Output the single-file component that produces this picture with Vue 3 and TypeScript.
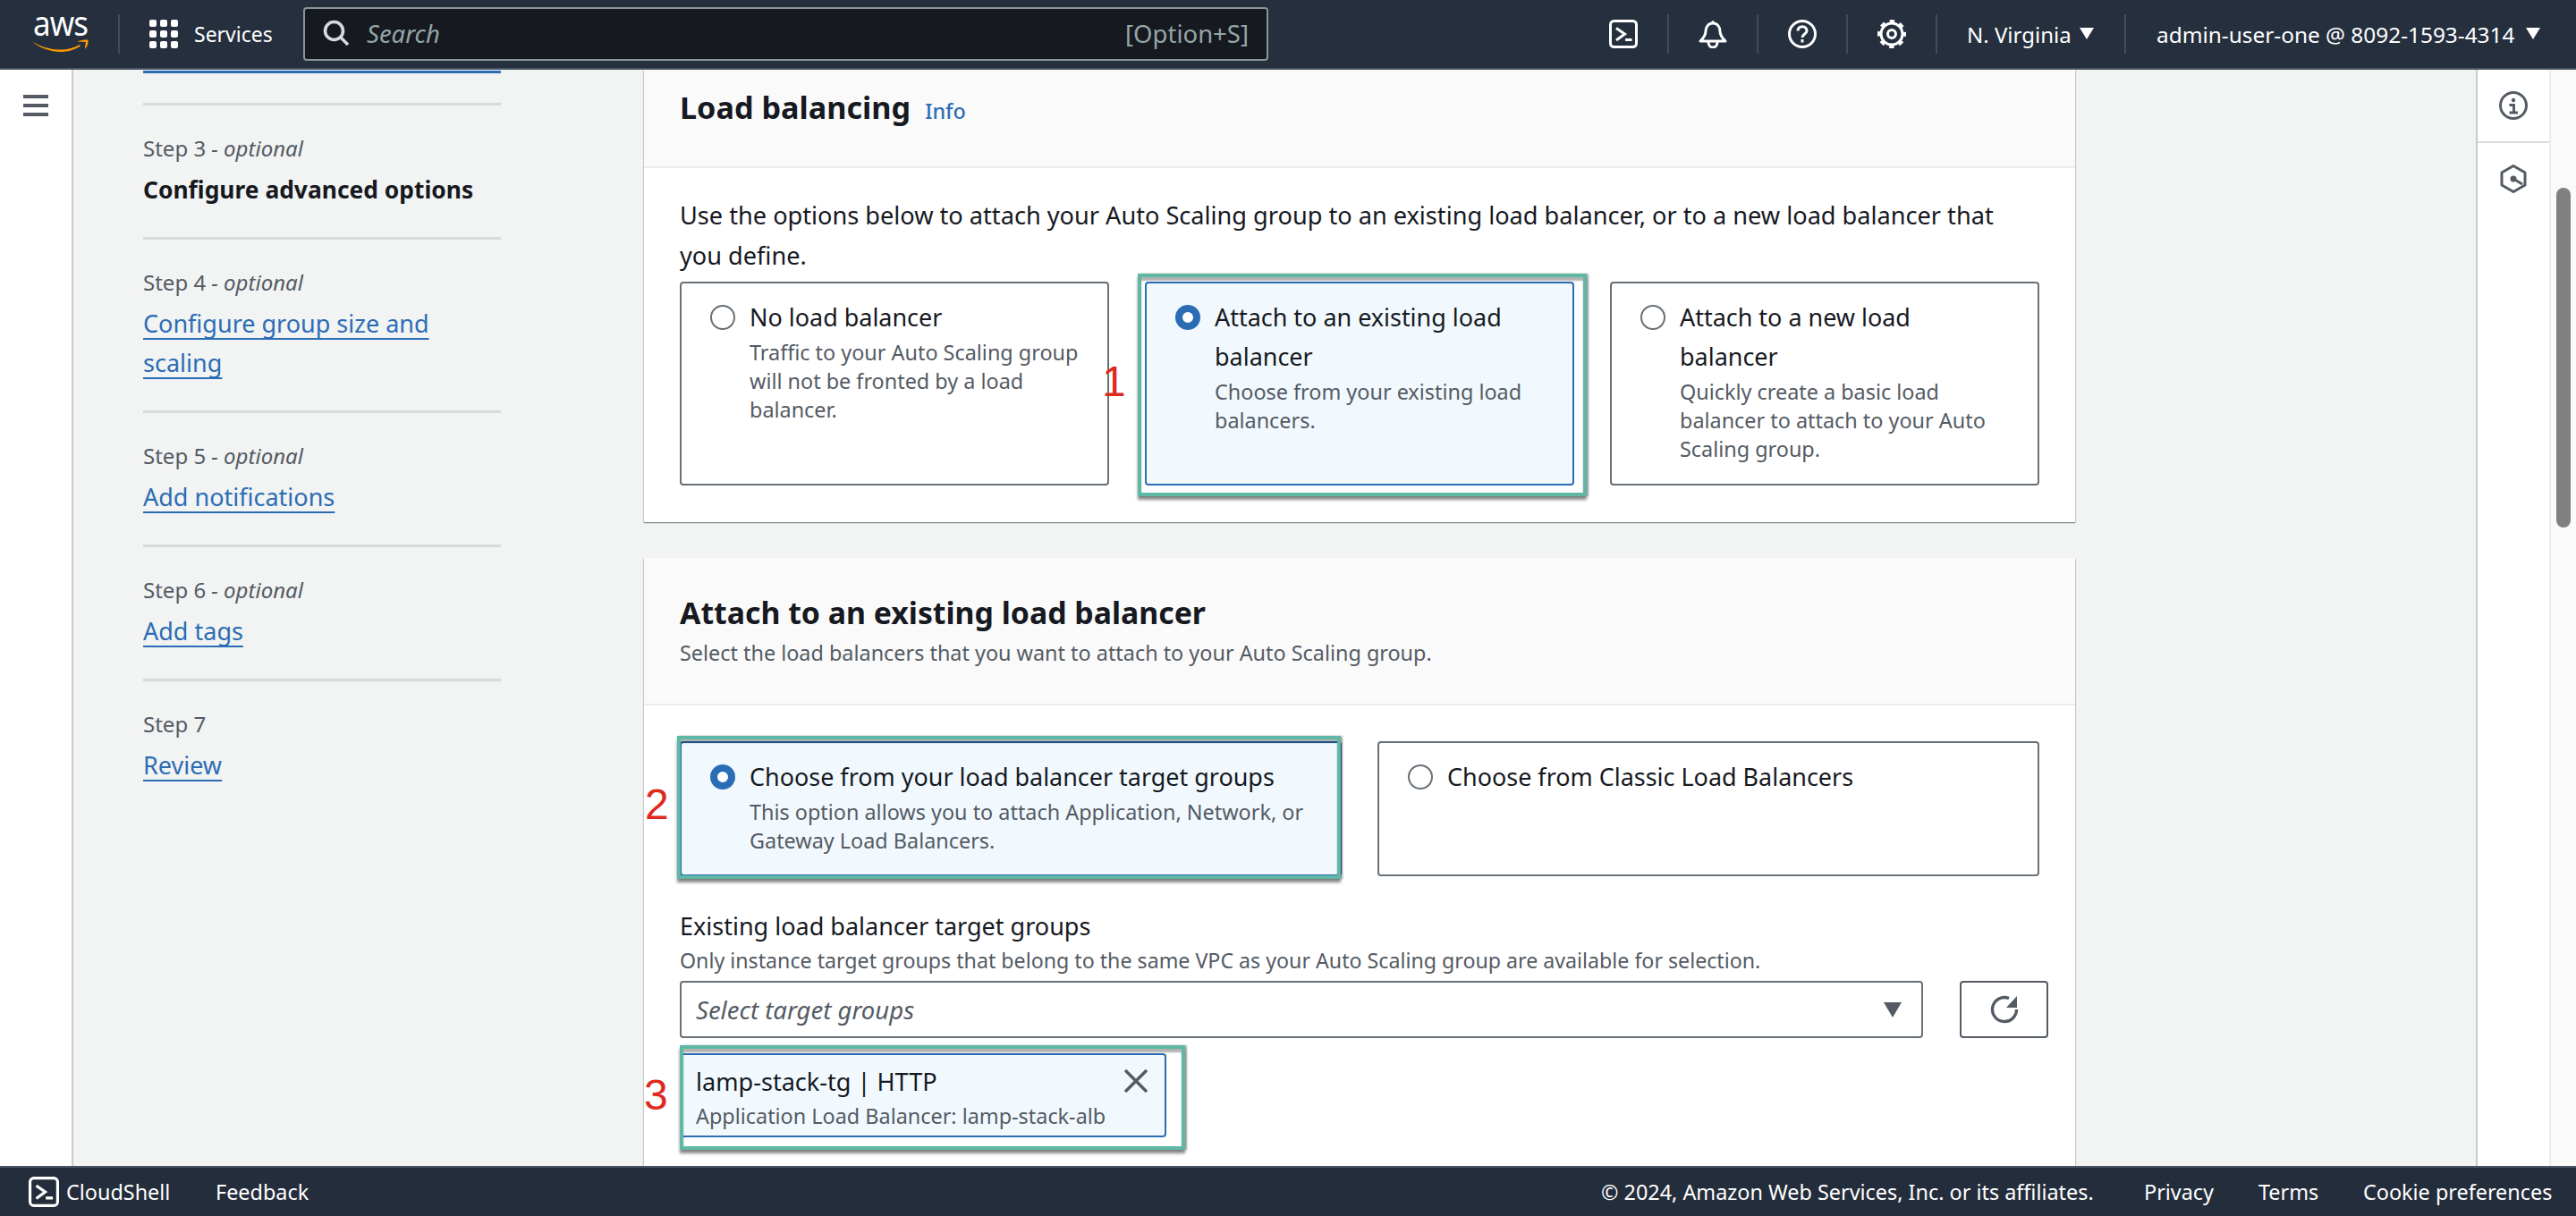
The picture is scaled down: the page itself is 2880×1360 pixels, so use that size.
<script setup lang="ts">
interface NavStep { label: string; optional: boolean; title: string; current?: boolean }
const steps: NavStep[] = [
  { label: 'Step 3', optional: true, title: 'Configure advanced options', current: true },
  { label: 'Step 4', optional: true, title: 'Configure group size and scaling' },
  { label: 'Step 5', optional: true, title: 'Add notifications' },
  { label: 'Step 6', optional: true, title: 'Add tags' },
  { label: 'Step 7', optional: false, title: 'Review' },
]
</script>

<template>
  <div class="page">
    <header class="topbar">
      <div class="logo">
        <span class="logo-word">aws</span>
        <svg class="smile" width="63" height="14" viewBox="0 0 63 14"><path d="M0 2.500C12 10 24 11.500 32 11.500c8 0 15-2 21-5.500l1 1.500C47 12 39 14 32 14 21 14 9 10 0 2.500z" fill="#f90"/><path d="M50 2.500c4-1.500 8-2 12.500-2 .5 4-1 8-3.500 10.500 0-3 .5-5.500 1-8-3.500 0-6.500-.3-10-.5z" fill="#f90"/></svg>
      </div>
      <span class="sep logo-sep"></span>
      <svg class="grid" width="32" height="32" viewBox="0 0 32 32" fill="#fff"><rect x="0" y="0" width="8" height="8" rx="2"/><rect x="12" y="0" width="8" height="8" rx="2"/><rect x="24" y="0" width="8" height="8" rx="2"/><rect x="0" y="12" width="8" height="8" rx="2"/><rect x="12" y="12" width="8" height="8" rx="2"/><rect x="24" y="12" width="8" height="8" rx="2"/><rect x="0" y="24" width="8" height="8" rx="2"/><rect x="12" y="24" width="8" height="8" rx="2"/><rect x="24" y="24" width="8" height="8" rx="2"/></svg>
      <span class="services">Services</span>
      <div class="search">
        <svg width="30" height="30" viewBox="0 0 30 30" fill="none" stroke="#d5dbdb" stroke-width="3.600"><circle cx="12.500" cy="12.500" r="10"/><path d="M20 20l8 8"/></svg>
        <span class="search-text">Search</span>
        <span class="search-key">[Option+S]</span>
      </div>
      <div class="top-right">
        <button class="ticon"><svg width="32" height="32" viewBox="0 0 32 32" fill="none" stroke="#fff" stroke-width="3"><rect x="1.500" y="1.500" width="29" height="29" rx="4"/><path d="M8 9.500l9.500 6.500-9.500 7M18 22.500h7.500"/></svg></button>
        <span class="sep"></span>
        <button class="ticon"><svg width="32" height="32" viewBox="0 0 32 32" fill="none" stroke="#fff" stroke-width="3" stroke-linejoin="round"><path d="M2 24h28c-4-4-6-7-6-11 0-5-3-9-8-9s-8 4-8 9c0 4-2 7-6 11z"/><path d="M11 25c0 8 10 8 10 0"/><circle cx="16" cy="2.500" r="1.500" fill="#fff" stroke="none"/></svg></button>
        <span class="sep"></span>
        <button class="ticon"><svg width="32" height="32" viewBox="0 0 32 32" fill="none" stroke="#fff" stroke-width="3"><circle cx="16" cy="16" r="14.500"/><path d="M11 12.500c0-6.500 10-6.500 10 0 0 3.500-5 3.500-5 7.500"/><path d="M16 22v3.500"/></svg></button>
        <span class="sep"></span>
        <button class="ticon"><svg width="32" height="32" viewBox="0 0 32 32" fill="none" stroke="#fff"><circle cx="16" cy="16" r="12" stroke-width="3"/><circle cx="16" cy="16" r="14" stroke-width="4" stroke-dasharray="5.400 5.600" stroke-dashoffset="2.700"/><circle cx="16" cy="16" r="4.500" stroke-width="3"/></svg></button>
        <span class="sep"></span>
        <span class="region">N. Virginia</span><span class="tri"></span>
        <span class="sep user-sep"></span>
        <span class="user">admin-user-one @ 8092-1593-4314</span><span class="tri"></span>
      </div>
    </header>

    <div class="middle">
      <div class="rail">
        <div class="burger"><i></i><i></i><i></i></div>
      </div>

      <nav class="nav">
        <div class="clipped-link"></div>
        <section v-for="s in steps" :key="s.label" class="step">
          <div class="step-label">{{ s.label }}<em v-if="s.optional"> - optional</em></div>
          <div v-if="s.current" class="step-current">{{ s.title }}</div>
          <a v-else class="step-link">{{ s.title }}</a>
        </section>
      </nav>

      <main class="main">
        <section class="card">
          <div class="card-head first-head">
            <h2 class="h-lb">Load balancing</h2><a class="info">Info</a>
          </div>
          <div class="card-body body-one">
            <p class="intro">Use the options below to attach your Auto Scaling group to an existing load balancer, or to a new load balancer that you define.</p>
            <div class="tiles three">
              <div class="tile">
                <span class="radio"></span>
                <div><div class="t-title">No load balancer</div><div class="t-desc">Traffic to your Auto Scaling group will not be fronted by a load balancer.</div></div>
              </div>
              <div class="tile on">
                <span class="radio"></span>
                <div><div class="t-title">Attach to an existing load balancer</div><div class="t-desc">Choose from your existing load balancers.</div></div>
                <span class="mark mark-1"></span>
                <span class="num num-1">1</span>
              </div>
              <div class="tile">
                <span class="radio"></span>
                <div><div class="t-title">Attach to a new load balancer</div><div class="t-desc">Quickly create a basic load balancer to attach to your Auto Scaling group.</div></div>
              </div>
            </div>
          </div>
        </section>

        <section class="card second">
          <div class="card-head second-head">
            <h2 class="h-attach">Attach to an existing load balancer</h2>
            <p class="head-desc">Select the load balancers that you want to attach to your Auto Scaling group.</p>
          </div>
          <div class="card-body body-two">
            <div class="tiles two">
              <div class="tile on">
                <span class="radio"></span>
                <div><div class="t-title">Choose from your load balancer target groups</div><div class="t-desc">This option allows you to attach Application, Network, or Gateway Load Balancers.</div></div>
                <span class="mark mark-2"></span>
                <span class="num num-2">2</span>
              </div>
              <div class="tile">
                <span class="radio"></span>
                <div><div class="t-title">Choose from Classic Load Balancers</div></div>
              </div>
            </div>
            <div class="field-label">Existing load balancer target groups</div>
            <div class="field-desc">Only instance target groups that belong to the same VPC as your Auto Scaling group are available for selection.</div>
            <div class="select-row">
              <div class="select"><span>Select target groups</span><span class="sel-tri"></span></div>
              <button class="refresh"><svg width="32" height="32" viewBox="0 0 32 32" fill="none" stroke="#545b64" stroke-width="3.400"><path d="M21 3.500a13.500 13.500 0 1 0 8.500 12.500"/><path d="M30 1v13H18z" fill="#545b64" stroke="none"/></svg></button>
            </div>
            <div class="chip">
              <div class="chip-title">lamp-stack-tg | HTTP</div>
              <div class="chip-desc">Application Load Balancer: lamp-stack-alb</div>
              <svg class="chip-x" width="28" height="28" viewBox="0 0 28 28" stroke="#545b64" stroke-width="3.400" fill="none"><path d="M2 2l24 24M26 2L2 26"/></svg>
              <span class="mark mark-3"></span>
              <span class="num num-3">3</span>
            </div>
          </div>
        </section>
      </main>

      <aside class="side">
        <div class="side-cell">
          <svg width="32" height="32" viewBox="0 0 32 32" fill="none" stroke="#545b64" stroke-width="3"><circle cx="16" cy="16" r="14.500"/><circle cx="16" cy="10" r="2.200" fill="#545b64" stroke="none"/><path d="M11.500 15.500h5v8M11.500 24h9.500"/></svg>
        </div>
        <div class="side-cell cell-two">
          <svg width="30" height="32" viewBox="0 0 30 32" fill="none" stroke="#545b64" stroke-width="3"><path d="M15 1.500l13 7.500v14l-13 7.500L2 23V9z" stroke-linejoin="round"/><circle cx="15" cy="16" r="3.500" fill="#545b64" stroke="none"/><path d="M15 16l10 6"/></svg>
        </div>
      </aside>

      <div class="scrolltrack"><span class="thumb"></span></div>
    </div>

    <footer class="footer">
      <svg class="f-shell" width="34" height="34" viewBox="0 0 32 32" fill="none" stroke="#fff" stroke-width="3"><rect x="1.500" y="1.500" width="29" height="29" rx="4"/><path d="M8 9.500l9.500 6.500-9.500 7M18 22.500h7.500"/></svg>
      <span class="f-cloud">CloudShell</span>
      <span class="f-feedback">Feedback</span>
      <span class="f-copy">© 2024, Amazon Web Services, Inc. or its affiliates.</span>
      <span class="f-link f-privacy">Privacy</span>
      <span class="f-link f-terms">Terms</span>
      <span class="f-link f-cookie">Cookie preferences</span>
    </footer>
  </div>
</template>

<style>
html, body { margin: 0; overflow: hidden; }
</style>

<style scoped>
.page { width: 2880px; height: 1360px; display: flex; flex-direction: column; overflow: hidden; font-family: "Noto Sans", "Open Sans", sans-serif; color: #16191f; background: #f2f3f3; }
p, h2 { margin: 0; }
button { background: none; border: 0; padding: 0; display: flex; }

.topbar { height: 76px; flex: none; box-sizing: content-box; background: #252f3e; border-bottom: 2px solid #4a5564; display: flex; align-items: center; color: #fff; }
.logo { width: 62px; margin-left: 36px; height: 56px; flex: none; }
.logo-word { display: block; font-weight: 400; font-size: 38px; line-height: 30px; letter-spacing: -1px; transform: scaleX(.92); transform-origin: left; margin-left: 1px; }
.smile { display: block; margin-top: 4px; }
.sep { width: 2px; height: 44px; background: #434b58; flex: none; }
.logo-sep { margin-left: 34px; }
.grid { margin-left: 33px; flex: none; }
.services { margin-left: 18px; font-size: 23px; width: 88px; white-space: nowrap; }
.search { margin-left: 34px; width: 1079px; height: 60px; box-sizing: border-box; background: #16191f; border: 2px solid #879596; border-radius: 4px; display: flex; align-items: center; padding: 0 20px 2px; font-size: 27.500px; color: #95a5a6; }
.search svg { flex: none; }
.search-text { font-style: italic; margin-left: 19px; flex: 1; }
.top-right { display: flex; align-items: center; margin-left: 381px; }
.ticon { width: 32px; justify-content: center; }
.top-right .sep { margin: 0 33px; }
.region { font-size: 24px; white-space: nowrap; width: 113px; }
.tri { width: 0; height: 0; border-left: 8px solid transparent; border-right: 8px solid transparent; border-top: 13px solid #fff; margin: -2px 0 0 13px; flex: none; }
.top-right .user-sep { margin: 0 34px; }
.user { font-size: 24.400px; white-space: nowrap; width: 400px; }

.middle { flex: 1; min-height: 0; display: flex; overflow: hidden; }
.rail { width: 80px; flex: none; background: #fff; border-right: 2px solid #c8cccc; box-sizing: content-box; }
.burger { margin: 28px 0 0 26px; width: 28px; display: flex; flex-direction: column; gap: 6px; }
.burger i { display: block; height: 4px; background: #545b64; }

.nav { width: 638px; flex: none; box-sizing: border-box; padding-left: 78px; }
.clipped-link { width: 400px; height: 3px; background: #2b6db5; margin: 1px 0 33px; }
.step { width: 400px; border-top: 3px solid #d5dbdb; padding: 36px 0 31px; }
.step-label { font-size: 24px; line-height: 24px; margin-bottom: 12px; color: #545b64; }
.step-label em { font-style: italic; }
.step-current { font-size: 26.400px; line-height: 44px; font-weight: 700; white-space: nowrap; }
.step-link { font-size: 27px; line-height: 44px; color: #2b6db5; text-decoration: underline; text-decoration-thickness: 2px; text-underline-offset: 6px; display: block; width: 340px; }

.main { width: 1600px; flex: none; }
.card { background: #fff; box-shadow: 0 1px 1px rgba(0,28,36,.3), 1px 1px 1px rgba(0,28,36,.15), -1px 1px 1px rgba(0,28,36,.15); }
.card.second { margin-top: 40px; }
.card-head { background: #fafafa; border-bottom: 2px solid #eaeded; padding: 0 40px; box-sizing: border-box; }
.first-head { height: 110px; padding-top: 18px; display: flex; align-items: baseline; }
.h-lb { font-size: 34.200px; line-height: 48px; font-weight: 700; }
.info { font-size: 23.400px; font-weight: 500; color: #2b6db5; margin-left: 16px; }
.second-head { height: 165px; padding-top: 39px; }
.h-attach { font-size: 33.800px; line-height: 44px; font-weight: 700; }
.head-desc { font-size: 23.400px; line-height: 32px; color: #545b64; margin-top: 7px; }
.card-body { padding: 0 40px; }
.body-one { padding-top: 30px; padding-bottom: 41px; }
.intro { font-size: 27.150px; line-height: 45px; margin-bottom: 7px; }
.tiles { display: grid; gap: 40px; }
.three { grid-template-columns: repeat(3, 1fr); }
.three .tile { height: 228px; }
.two { grid-template-columns: repeat(2, 1fr); }
.two .tile { height: 151px; }
.body-two { padding-top: 40px; height: 520px; box-sizing: border-box; }
.tile { position: relative; box-sizing: border-box; border: 2px solid #687078; border-radius: 4px; padding: 16px 28px 0 32px; display: flex; gap: 16px; background: #fff; }
.tile.on { border-color: #2b6db5; background: #f1f9fe; }
.radio { flex: none; width: 28px; height: 28px; box-sizing: border-box; border-radius: 50%; border: 2px solid #687078; margin-top: 8px; background: #fff; }
.on .radio { border: 8px solid #2b6db5; }
.t-title { font-size: 26.950px; line-height: 44px; }
.t-desc { font-size: 23.400px; line-height: 32px; color: #545b64; margin-top: 1px; }
.field-label { font-size: 27px; line-height: 40px; margin-top: 36px; }
.field-desc { font-size: 23.200px; line-height: 32px; color: #545b64; margin-top: 2px; }
.select-row { display: flex; gap: 41px; margin: 7px -10px 0 0; }
.select { flex: 1; height: 64px; box-sizing: border-box; border: 2px solid #687078; border-radius: 4px; display: flex; align-items: center; justify-content: space-between; padding: 0 22px 0 16px; font-size: 27.500px; font-style: italic; color: #545b64; }
.sel-tri { width: 0; height: 0; border-left: 10px solid transparent; border-right: 10px solid transparent; border-top: 17px solid #545b64; }
.refresh { width: 99px; height: 64px; box-sizing: border-box; border: 2px solid #545b64; border-radius: 4px; align-items: center; justify-content: center; }
.chip { position: relative; width: 544px; height: 94px; box-sizing: border-box; margin-top: 17px; background: #f1f9fe; border: 2px solid #2b6db5; border-radius: 4px; padding: 10px 16px 0; }
.chip-title { font-size: 27.100px; line-height: 40px; }
.chip-desc { font-size: 23.400px; line-height: 32px; color: #545b64; margin-top: 2px; }
.chip-x { position: absolute; right: 18px; top: 15px; }
.mark { position: absolute; border: 4px solid #5fb8a5; box-shadow: 0 4px 3px rgba(0,0,0,.45), 2px 0 2px rgba(0,0,0,.3), inset 0 4px 2px rgba(0,0,0,.3); pointer-events: none; }
.mark-1 { inset: -11px -16px -14px -10px; }
.mark-2 { inset: -8px -1px -5px -5px; }
.mark-3 { inset: -11px -23px -16px -2px; }
.num { position: absolute; font-family: "Liberation Sans", sans-serif; font-size: 48px; line-height: 48px; color: #e0291e; }
.num-1 { left: -50px; top: 86px; }
.num-2 { left: -41px; top: 45px; }
.num-3 { left: -42px; top: 21px; }

.side { width: 80px; flex: none; margin-left: 448px; background: #fff; border-left: 2px solid #c8cccc; box-sizing: content-box; }
.side-cell { height: 80px; display: flex; justify-content: center; padding-top: 24px; box-sizing: border-box; }
.cell-two { border-top: 2px solid #d5dbdb; }
.scrolltrack { flex: 1; background: #fafafa; border-left: 2px solid #eaeded; position: relative; }
.thumb { position: absolute; left: 6px; top: 132px; width: 16px; height: 380px; border-radius: 8px; background: #808080; }

.footer { height: 54px; flex: none; box-sizing: content-box; border-top: 2px solid #4a5564; background: #242d3b; color: #fff; display: flex; align-items: center; font-size: 23.400px; }
.f-shell { margin-left: 32px; flex: none; }
.f-cloud { margin-left: 8px; width: 117px; white-space: nowrap; }
.f-feedback { margin-left: 50px; }
.f-copy { margin-left: auto; width: 547px; white-space: nowrap; }
.f-link { white-space: nowrap; }
.f-privacy { margin-left: 60px; width: 79px; }
.f-terms { margin-left: 49px; width: 67px; }
.f-cookie { margin-left: 50px; width: 206px; margin-right: 32px; }
</style>
